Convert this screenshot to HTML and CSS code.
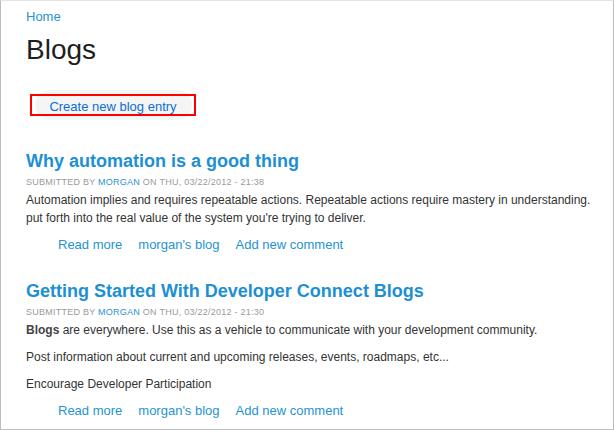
FILE: index.html
```html
<!DOCTYPE html>
<html lang="en">
<head>
<meta charset="utf-8">
<title>Blogs</title>
<link rel="stylesheet" href="styles.css">
</head>
<body>
<div class="frame">
  <span class="tick"></span>
  <div class="breadcrumb"><a href="#">Home</a></div>
  <h1 class="page-title">Blogs</h1>
  <div class="actions"><a class="action-link" href="#">Create new blog entry</a></div>

  <div class="article">
    <h2 class="article-title"><a href="#">Why automation is a good thing</a></h2>
    <div class="meta">Submitted by <a href="#">morgan</a> on Thu, 03/22/2012 - 21:38</div>
    <div class="body body-wrap">
      <p>Automation implies and requires repeatable actions. Repeatable actions require mastery in understanding. put forth into the real value of the system you're trying to deliver.</p>
    </div>
    <ul class="links">
      <li><a href="#">Read more</a></li>
      <li><a href="#">morgan's blog</a></li>
      <li><a href="#">Add new comment</a></li>
    </ul>
  </div>

  <div class="article">
    <h2 class="article-title"><a href="#">Getting Started With Developer Connect Blogs</a></h2>
    <div class="meta">Submitted by <a href="#">morgan</a> on Thu, 03/22/2012 - 21:30</div>
    <div class="body">
      <p><strong>Blogs</strong> are everywhere. Use this as a vehicle to communicate with your development community.</p>
      <p>Post information about current and upcoming releases, events, roadmaps, etc...</p>
      <p>Encourage Developer Participation</p>
    </div>
    <ul class="links">
      <li><a href="#">Read more</a></li>
      <li><a href="#">morgan's blog</a></li>
      <li><a href="#">Add new comment</a></li>
    </ul>
  </div>
</div>
</body>
</html>
```

FILE: styles.css
```css
html, body {
  margin: 0;
  padding: 0;
  background: #fff;
}

body {
  font-family: "Liberation Sans", Arial, sans-serif;
  color: #333;
}

a {
  text-decoration: none;
}

.frame {
  position: relative;
  box-sizing: border-box;
  width: 614px;
  height: 430px;
  border-left: 1px solid #bdbdbd;
  border-right: 1px solid #bdbdbd;
  border-bottom: 1px solid #bdbdbd;
  border-top: 1px solid #e4e4e4;
  padding: 8px 0 0 25px;
  overflow: hidden;
}

.tick {
  position: absolute;
  left: 34px;
  top: -1px;
  width: 2px;
  height: 1px;
  background: #ec7a5a;
}

.breadcrumb {
  font-size: 13px;
  line-height: 15px;
}

.breadcrumb a {
  color: #2593d3;
}

.page-title {
  margin: 10px 0 0;
  font-size: 28px;
  line-height: 32px;
  font-weight: normal;
  color: #1e1e1e;
}

.actions {
  position: relative;
  z-index: 0;
  margin: 28px 0 0 4px;
  height: 22px;
}

.action-link {
  position: relative;
  display: block;
  box-sizing: border-box;
  width: 166px;
  height: 22px;
  padding-top: 3px;
  border: 2px solid #f00;
  font-size: 13px;
  line-height: 15px;
  text-align: center;
  color: #0b6ed6;
}

.action-link::before {
  content: "";
  position: absolute;
  left: 3px;
  right: 2px;
  top: -6px;
  bottom: -6px;
  border-radius: 15px;
  background: #f5f5f6;
  z-index: -1;
}

.article {
  width: 586px;
  margin-top: 34px;
}

.article + .article {
  margin-top: 26px;
}

.article-title {
  margin: 0 0 3px;
  font-size: 18px;
  line-height: 22px;
  font-weight: bold;
}

.article-title a {
  color: #1d90d3;
}

.meta {
  font-size: 9px;
  line-height: 14px;
  letter-spacing: 0.25px;
  text-transform: uppercase;
  color: #9a9a9a;
  margin-bottom: 2px;
}

.meta a {
  color: #2593d3;
}

.body {
  font-size: 12px;
  line-height: 18px;
  color: #333;
}

.body-wrap {
  width: 574px;
}

.body p {
  margin: 0 0 9px;
}

.body strong {
  color: #444;
}

.links {
  list-style: none;
  margin: 0;
  padding: 0 0 0 32px;
  display: flex;
  gap: 16px;
  font-size: 13px;
  line-height: 18px;
}

.links a {
  color: #2593d3;
}
```
